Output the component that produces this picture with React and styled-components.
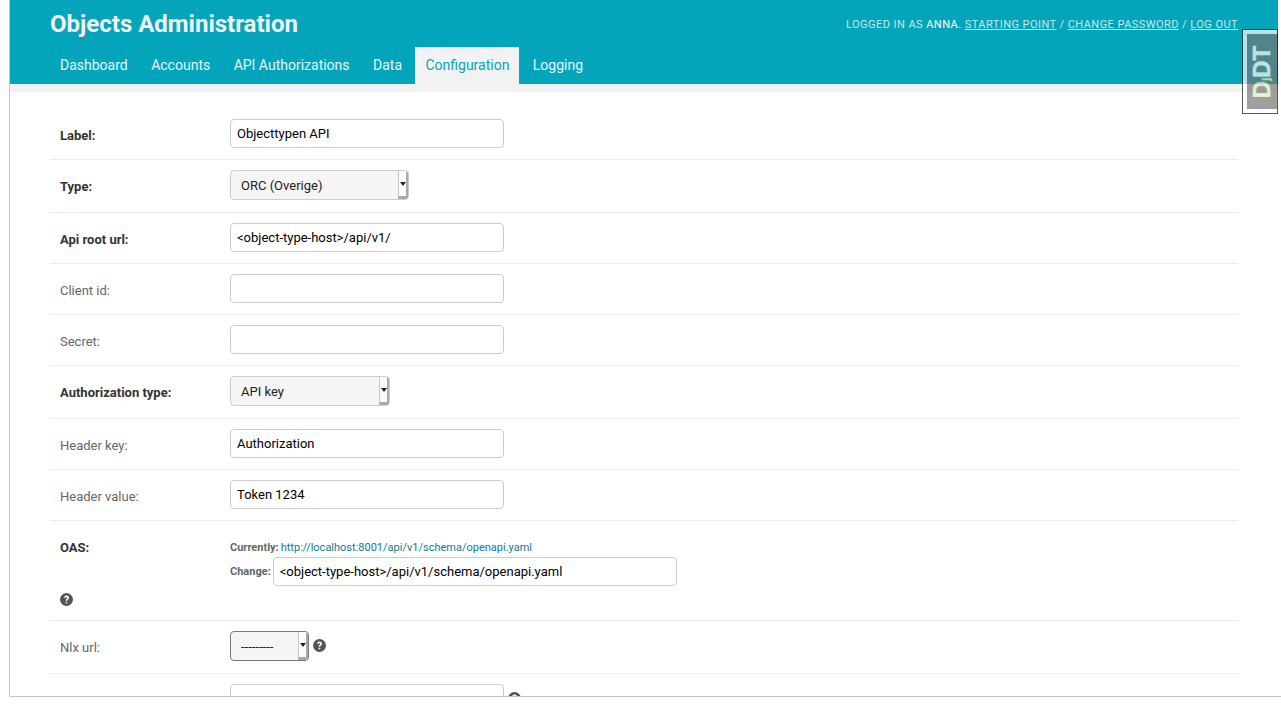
import React from 'react'
import styled, { createGlobalStyle } from 'styled-components'

const GlobalStyle = createGlobalStyle`
  html, body {
    margin: 0;
    padding: 0;
    height: 100%;
    background: #fff;
    overflow: hidden;
  }
  body {
    font-family: Roboto, "Liberation Sans", sans-serif;
    font-size: 14px;
    color: #333;
  }
`

const Frame = styled.div`
  position: relative;
  margin-left: 9px;
  height: 697px;
  padding-right: 3px;
  border-left: 1px solid #c4c4c4;
  border-bottom: 1px solid #c4c4c4;
  box-sizing: border-box;
  overflow: hidden;
`

const Header = styled.header`
  background: #04a5bb;
  height: 84px;
  padding: 0 40px;
  display: flex;
  flex-direction: column;
  justify-content: space-between;
`

const TopLine = styled.div`
  display: flex;
  justify-content: space-between;
  align-items: center;
  height: 47px;
`

const Brand = styled.h1`
  margin: 0;
  font-size: 24px;
  font-weight: 700;
  color: #f2f2f2;
`

const UserTools = styled.div`
  margin-top: 2px;
  font-size: 11px;
  letter-spacing: 0.45px;
  text-transform: uppercase;
  color: #c4e8ee;

  strong {
    font-weight: 400;
    color: #fff;
  }
  a {
    color: #c4e8ee;
    text-decoration: underline;
  }
`

const Nav = styled.nav`
  display: flex;
  height: 37px;
`

const Tab = styled.a`
  display: flex;
  align-items: center;
  padding: 0 10px 2px;
  margin-right: 3.45px;
  font-size: 14px;
  color: ${(p) => (p.$active ? '#04a5bb' : '#e4f5f8')};
  background: ${(p) => (p.$active ? '#f2f2f2' : 'transparent')};
`

const Strip = styled.div`
  height: 8px;
  background: #f2f2f2;
`

const Form = styled.form`
  padding: 17px 40px 0;
`

const Row = styled.div`
  display: flex;
  padding: 10px 0 11px;
  border-bottom: 1px solid #eee;
  min-height: ${(p) => (p.$tall ? '78px' : 'auto')};
`

const Label = styled.label`
  width: 180px;
  flex: none;
  padding: 9px 0 0 10px;
  box-sizing: border-box;
  font-size: 13px;
  line-height: 16px;
  font-weight: ${(p) => (p.$required ? 700 : 400)};
  color: ${(p) => (p.$required ? '#333' : '#666')};
`

const Input = styled.input`
  box-sizing: border-box;
  width: ${(p) => p.$width || '274px'};
  height: 29px;
  padding: 0 6px;
  border: 1px solid #ccc;
  border-radius: 4px;
  background: #fff;
  font-family: Roboto, sans-serif;
  font-size: 13px;
  color: #000;
  outline: none;
`

const SelectBox = styled.div`
  box-sizing: border-box;
  width: ${(p) => p.$width};
  height: 30px;
  margin-bottom: 1px;
  padding-left: 10px;
  display: flex;
  align-items: center;
  justify-content: space-between;
  border: 1px solid ${(p) => (p.$dark ? '#777' : '#ccc')};
  border-radius: 4px;
  background: #f5f5f5;
  font-size: 13px;
  color: #222;
  overflow: hidden;
`

const SelectArrow = styled.span`
  flex: none;
  width: 10px;
  height: 100%;
  box-sizing: border-box;
  display: flex;
  justify-content: center;
  padding-top: 11px;
  background: #fbfbfb;
  border-left: 1px solid #c8c8c8;
  border-bottom: 3px solid #aaa;
  border-right: 2px solid #aaa;

  &::after {
    content: '';
    width: 0;
    height: 0;
    border-left: 3px solid transparent;
    border-right: 3px solid transparent;
    border-top: 4px solid #222;
  }
`

const Field = styled.div`
  display: flex;
  align-items: flex-start;
`

const Help = styled.svg`
  flex: none;
  width: 13px;
  height: 13px;
  margin: ${(p) => p.$margin || '8px 0 0 4px'};
  fill: #555;
`

const FileColumn = styled.div`
  padding-top: 10px;
  font-size: 11px;
  font-weight: 700;
  color: #666;
`

const FileLine = styled.div`
  display: flex;
  align-items: center;
  gap: 2px;
  margin-bottom: ${(p) => p.$gap || '0'};

  a {
    font-weight: 400;
    color: #127a92;
  }
`

const OasLabel = styled.div`
  width: 180px;
  flex: none;
  padding: 9px 0 3px 10px;
  box-sizing: border-box;
  display: flex;
  flex-direction: column;
  justify-content: space-between;
  font-size: 13px;
  font-weight: 700;
`

const HandleOuter = styled.div`
  position: absolute;
  top: 29px;
  right: 3px;
  width: 36px;
  height: 85px;
  box-sizing: border-box;
  border: 1px solid #111;
  background: #fff;
  padding: 4px 0 4px 4px;
  opacity: 0.7;
`

const HandleInner = styled.div`
  height: 100%;
  background: #777;
  display: flex;
  align-items: center;
  justify-content: center;
`

const HandleText = styled.span`
  display: block;
  transform: rotate(-90deg);
  font-family: "Liberation Sans", sans-serif;
  font-size: 24px;
  font-weight: 700;
  white-space: nowrap;
  color: #fff;
  -webkit-text-stroke: 0.5px currentColor;

  b {
    color: #dbf1bc;
  }
  small {
    font-size: 11px;
    color: #dbf1bc;
  }
`

const HelpIcon = ({ margin }) => (
  <Help viewBox="0 0 16 16" $margin={margin}>
    <path d="M8 0a8 8 0 1 0 0 16A8 8 0 0 0 8 0zm.9 12.6H7v-1.9h1.9v1.9zm1.9-5.5c-.3.4-.8.7-1.2 1-.4.3-.6.6-.6 1.1v.3H7.1v-.5c0-.9.3-1.4.9-1.9.5-.4 1.1-.7 1.1-1.3 0-.5-.4-.9-1.1-.9s-1.2.4-1.3 1.2L5 5.4C5.200 4 6.300 3 8.100 3c1.700 0 2.900 1 2.900 2.500 0 .6-.1 1.100-.2 1.600z" />
  </Help>
)

const Select = ({ width, dark, children }) => (
  <SelectBox $width={width} $dark={dark}>
    {children}
    <SelectArrow />
  </SelectBox>
)

const tabs = ['Dashboard', 'Accounts', 'API Authorizations', 'Data', 'Configuration', 'Logging']

export default function App() {
  return (
    <>
      <GlobalStyle />
      <Frame>
        <Header>
          <TopLine>
            <Brand>Objects Administration</Brand>
            <UserTools>
              Logged in as <strong>anna</strong>. <a>Starting point</a> / <a>Change password</a> /{' '}
              <a>Log out</a>
            </UserTools>
          </TopLine>
          <Nav>
            {tabs.map((t) => (
              <Tab key={t} $active={t === 'Configuration'}>
                {t}
              </Tab>
            ))}
          </Nav>
        </Header>
        <Strip />
        <Form>
          <Row>
            <Label $required>Label:</Label>
            <Input defaultValue="Objecttypen API" />
          </Row>
          <Row>
            <Label $required>Type:</Label>
            <Select width="179px">ORC (Overige)</Select>
          </Row>
          <Row>
            <Label $required>Api root url:</Label>
            <Input defaultValue="<object-type-host>/api/v1/" />
          </Row>
          <Row>
            <Label>Client id:</Label>
            <Input />
          </Row>
          <Row>
            <Label>Secret:</Label>
            <Input />
          </Row>
          <Row>
            <Label $required>Authorization type:</Label>
            <Select width="160px">API key</Select>
          </Row>
          <Row>
            <Label>Header key:</Label>
            <Input defaultValue="Authorization" />
          </Row>
          <Row>
            <Label>Header value:</Label>
            <Input defaultValue="Token 1234" />
          </Row>
          <Row $tall>
            <OasLabel>
              <span>OAS:</span>
              <HelpIcon margin="0" />
            </OasLabel>
            <FileColumn>
              <FileLine $gap="3px">
                Currently: <a>http://localhost:8001/api/v1/schema/openapi.yaml</a>
              </FileLine>
              <FileLine>
                Change:
                <Input $width="404px" defaultValue="<object-type-host>/api/v1/schema/openapi.yaml" />
              </FileLine>
            </FileColumn>
          </Row>
          <Row>
            <Label>Nlx url:</Label>
            <Field>
              <Select width="79px" dark>---------</Select>
              <HelpIcon />
            </Field>
          </Row>
          <Row>
            <Label />
            <Field>
              <Input />
              <HelpIcon />
            </Field>
          </Row>
        </Form>
        <HandleOuter>
          <HandleInner>
            <HandleText>
              <b>D</b>
              <small>j</small>DT
            </HandleText>
          </HandleInner>
        </HandleOuter>
      </Frame>
    </>
  )
}
